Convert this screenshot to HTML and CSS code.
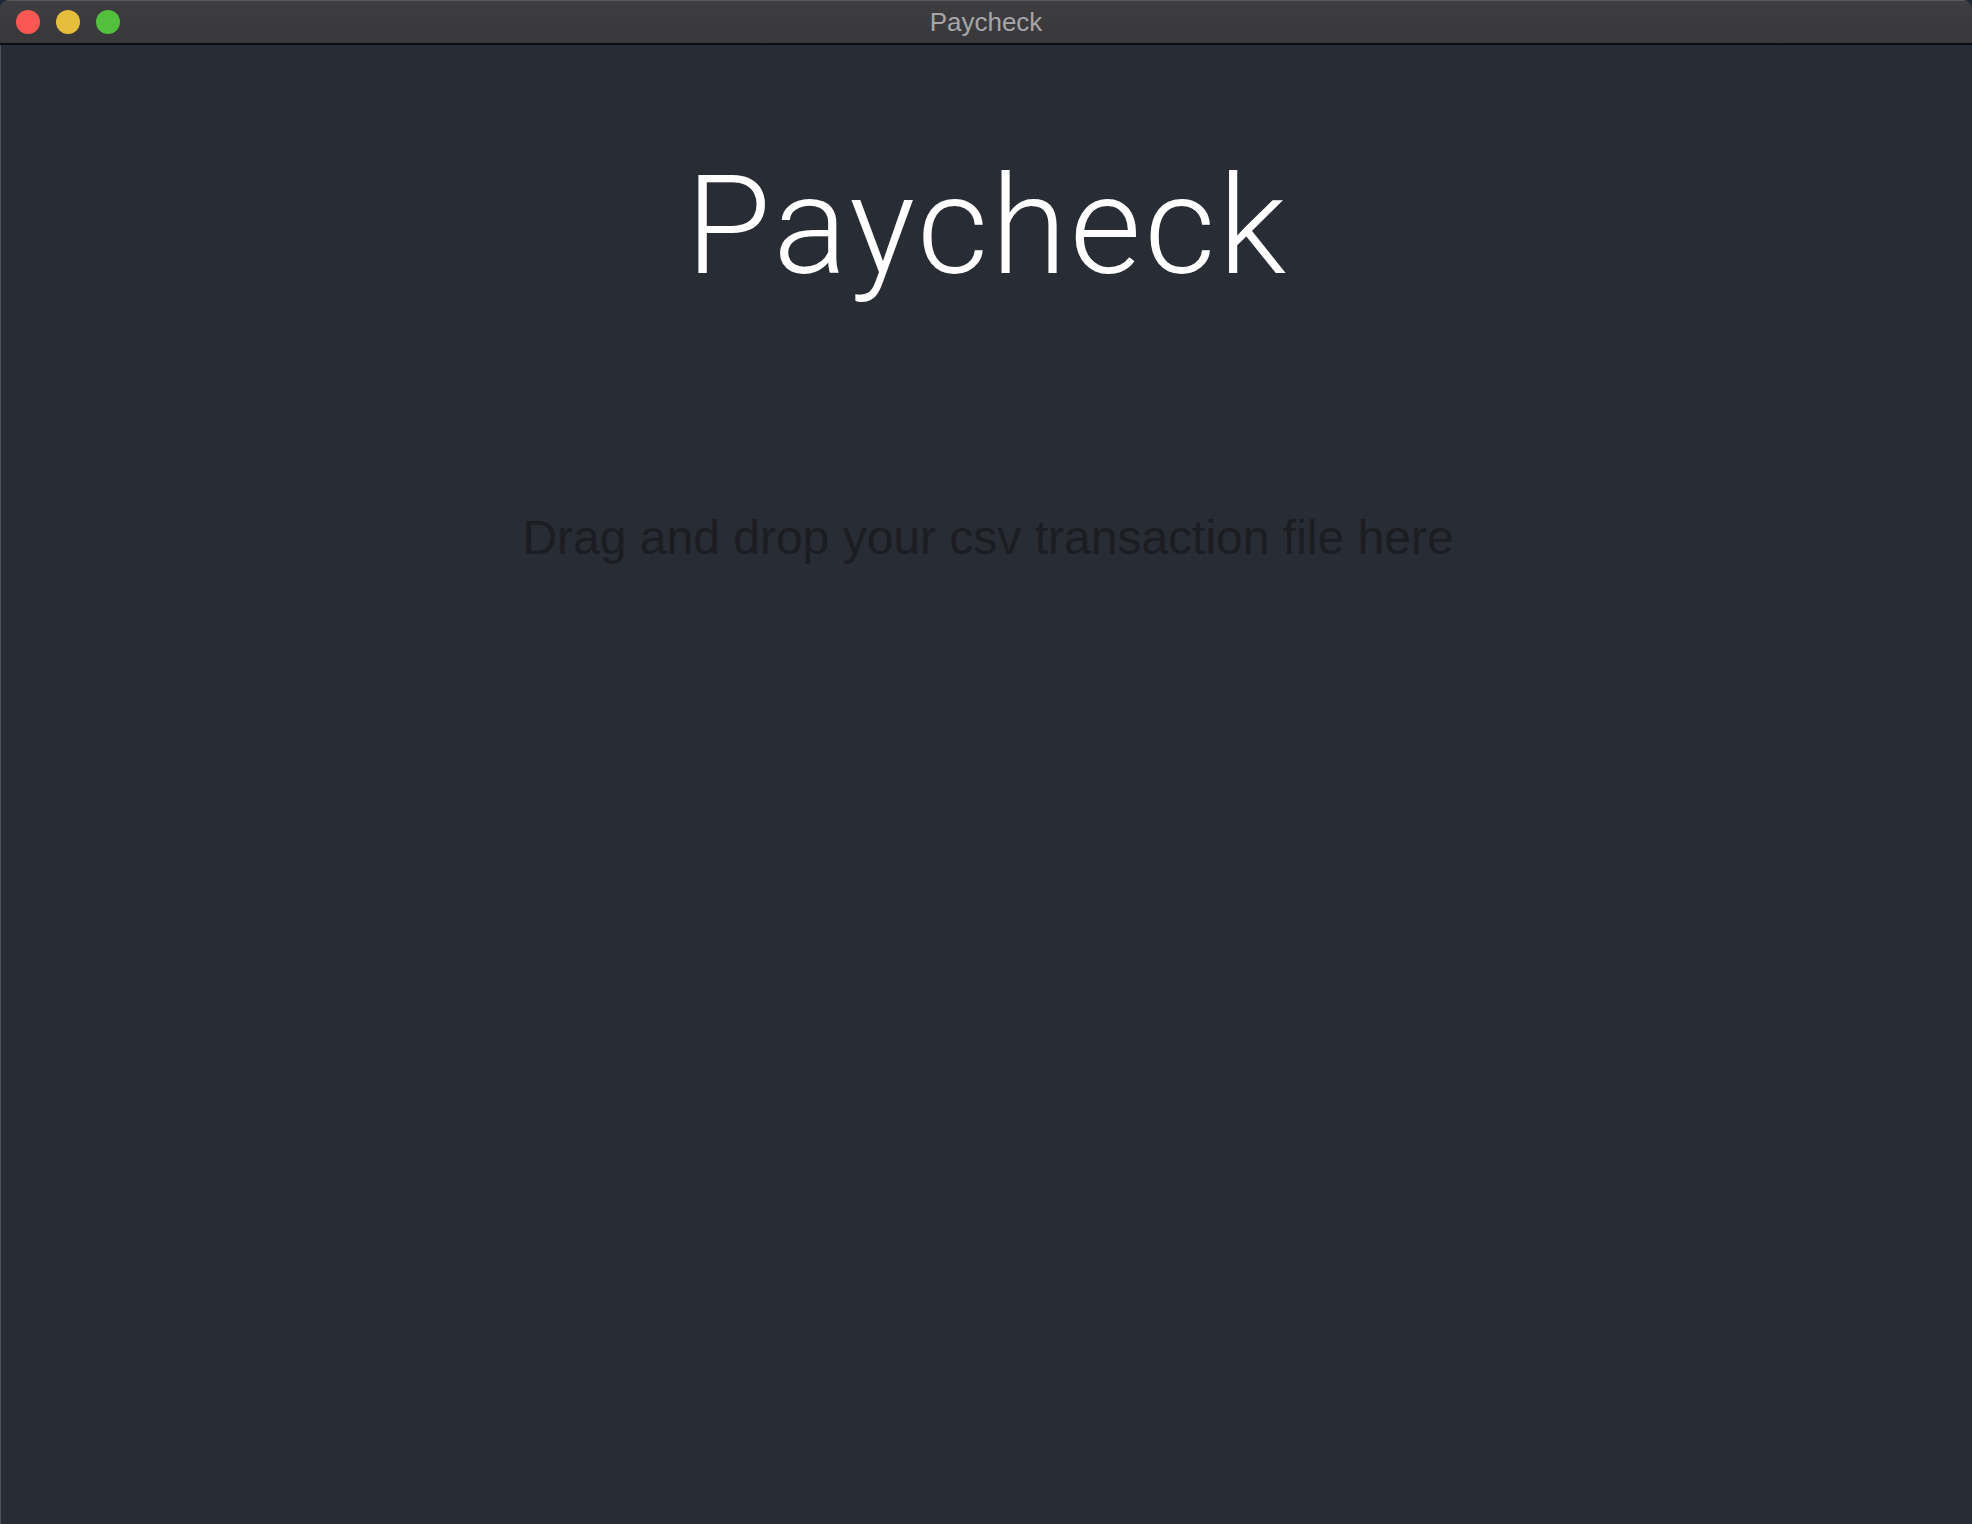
FILE: index.html
```html
<!DOCTYPE html>
<html lang="en">
<head>
<meta charset="utf-8">
<title>Paycheck</title>
<link rel="stylesheet" href="styles.css">
</head>
<body>
<div class="window">
  <header class="titlebar">
    <div class="lights">
      <span class="light red"></span>
      <span class="light yellow"></span>
      <span class="light green"></span>
    </div>
    <div class="wintitle">Paycheck</div>
  </header>
  <main class="content">
    <h1 class="apptitle">Paycheck</h1>
    <p class="dropzone">Drag and drop your csv transaction file here</p>
  </main>
</div>
</body>
</html>
```
FILE: styles.css
```css
html, body {
  margin: 0;
  padding: 0;
  height: 100%;
  background: #1d2838;
}
.window {
  height: 1524px;
  display: flex;
  flex-direction: column;
  border-radius: 9px 9px 0 0;
  overflow: hidden;
  background: #282c34;
  box-shadow: inset 1px 0 0 #4c5058;
}
.titlebar {
  position: relative;
  height: 42px;
  flex: 0 0 42px;
  background: linear-gradient(#3e3e40, #38383a);
  border-top: 1px solid #5a5a5c;
  border-bottom: 2px solid #0e0e10;
  box-sizing: content-box;
  display: flex;
  align-items: center;
  justify-content: center;
}
.lights {
  position: absolute;
  left: 16px;
  top: 9px;
  display: flex;
  gap: 16px;
}
.light {
  width: 24px;
  height: 24px;
  border-radius: 50%;
  display: block;
}
.red { background: #fc5753; }
.yellow { background: #e6be3c; }
.green { background: #52c03c; }
.wintitle {
  font-family: "Liberation Sans", Arial, sans-serif;
  font-size: 26px;
  color: #a6a6a8;
}
.content {
  flex: 1;
  display: flex;
  flex-direction: column;
  align-items: center;
}
.apptitle {
  margin: 99px 0 0;
  padding-left: 3px;
  font-family: Roboto, "Liberation Sans", sans-serif;
  font-weight: 300;
  font-size: 138px;
  line-height: 1.2;
  letter-spacing: 3px;
  color: #ffffff;
}
.dropzone {
  margin: 200px 0 0 4px;
  font-family: "Liberation Sans", Arial, sans-serif;
  font-size: 48px;
  color: #1b1d22;
}
```
